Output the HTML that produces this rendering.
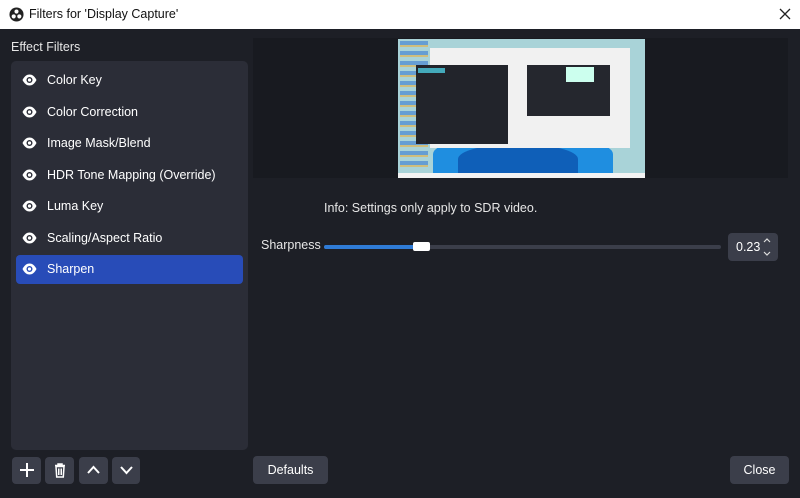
<!DOCTYPE html>
<html><head><meta charset="utf-8"><style>
*{margin:0;padding:0;box-sizing:border-box}
body{width:800px;height:498px;overflow:hidden;font-family:"Liberation Sans",sans-serif;background:#1d1f26;position:relative;color:#fff;font-size:12.5px}
.abs{position:absolute}
.title{left:0;top:0;width:800px;height:29px;background:#fff;color:#111;font-size:12.5px}
.list{left:11px;top:61px;width:237px;height:389px;background:#2b2d37;border-radius:5px}
.item{position:absolute;left:5px;width:227px;height:29px;border-radius:4px;line-height:29px;padding-left:31px}
.item svg{position:absolute;left:6px;top:8px}
.sel{background:#284cb8}
.btn{background:#3b3e4a;border-radius:4px;position:absolute;color:#fff;text-align:center}
</style></head><body>
<div class="abs title">
 <svg class="abs" style="left:9px;top:7px" width="15" height="15" viewBox="0 0 16 16"><circle cx="8" cy="8" r="7.5" fill="#222"/><circle cx="8" cy="4.8" r="2.2" fill="#fff"/><circle cx="5" cy="10" r="2.2" fill="#fff"/><circle cx="11" cy="10" r="2.2" fill="#fff"/></svg>
 <div class="abs" style="left:29px;top:7px">Filters for 'Display Capture'</div>
 <svg class="abs" style="left:779px;top:8px" width="12" height="12" viewBox="0 0 12 12"><path d="M1 1L11 11M11 1L1 11" stroke="#222" stroke-width="1.3"/></svg>
</div>
<div class="abs" style="left:11px;top:40px;color:#e6e6e6">Effect Filters</div>
<div class="abs list">
 <div class="item" style="top:5px"><svg width="15" height="12" viewBox="0 0 15 12"><path d="M0.5 6C2.5 2 5 0.5 7.5 0.5S12.5 2 14.5 6C12.5 10 10 11.5 7.5 11.5S2.5 10 0.5 6Z" fill="#fff"/><circle cx="7.5" cy="6" r="3" fill="#2b2d37"/><circle cx="7.5" cy="6" r="1.6" fill="#fff"/></svg>Color Key</div>
 <div class="item" style="top:37px"><svg width="15" height="12" viewBox="0 0 15 12"><path d="M0.5 6C2.5 2 5 0.5 7.5 0.5S12.5 2 14.5 6C12.5 10 10 11.5 7.5 11.5S2.5 10 0.5 6Z" fill="#fff"/><circle cx="7.5" cy="6" r="3" fill="#2b2d37"/><circle cx="7.5" cy="6" r="1.6" fill="#fff"/></svg>Color Correction</div>
 <div class="item" style="top:68px"><svg width="15" height="12" viewBox="0 0 15 12"><path d="M0.5 6C2.5 2 5 0.5 7.5 0.5S12.5 2 14.5 6C12.5 10 10 11.5 7.5 11.5S2.5 10 0.5 6Z" fill="#fff"/><circle cx="7.5" cy="6" r="3" fill="#2b2d37"/><circle cx="7.5" cy="6" r="1.6" fill="#fff"/></svg>Image Mask/Blend</div>
 <div class="item" style="top:100px"><svg width="15" height="12" viewBox="0 0 15 12"><path d="M0.5 6C2.5 2 5 0.5 7.5 0.5S12.5 2 14.5 6C12.5 10 10 11.5 7.5 11.5S2.5 10 0.5 6Z" fill="#fff"/><circle cx="7.5" cy="6" r="3" fill="#2b2d37"/><circle cx="7.5" cy="6" r="1.6" fill="#fff"/></svg>HDR Tone Mapping (Override)</div>
 <div class="item" style="top:131px"><svg width="15" height="12" viewBox="0 0 15 12"><path d="M0.5 6C2.5 2 5 0.5 7.5 0.5S12.5 2 14.5 6C12.5 10 10 11.5 7.5 11.5S2.5 10 0.5 6Z" fill="#fff"/><circle cx="7.5" cy="6" r="3" fill="#2b2d37"/><circle cx="7.5" cy="6" r="1.6" fill="#fff"/></svg>Luma Key</div>
 <div class="item" style="top:163px"><svg width="15" height="12" viewBox="0 0 15 12"><path d="M0.5 6C2.5 2 5 0.5 7.5 0.5S12.5 2 14.5 6C12.5 10 10 11.5 7.5 11.5S2.5 10 0.5 6Z" fill="#fff"/><circle cx="7.5" cy="6" r="3" fill="#2b2d37"/><circle cx="7.5" cy="6" r="1.6" fill="#fff"/></svg>Scaling/Aspect Ratio</div>
 <div class="item sel" style="top:194px"><svg width="15" height="12" viewBox="0 0 15 12"><path d="M0.5 6C2.5 2 5 0.5 7.5 0.5S12.5 2 14.5 6C12.5 10 10 11.5 7.5 11.5S2.5 10 0.5 6Z" fill="#fff"/><circle cx="7.5" cy="6" r="3" fill="#284cb8"/><circle cx="7.5" cy="6" r="1.6" fill="#fff"/></svg>Sharpen</div>
</div>
<div class="abs" style="left:253px;top:38px;width:535px;height:140px;background:#181a20"></div>
<div class="abs" style="left:398px;top:39px;width:247px;height:139px;background:#a9d3d8;overflow:hidden">
 <div class="abs" style="left:35px;top:95px;width:180px;height:40px;background:#1f8ee0;border-radius:50% 50% 0 0"></div>
 <div class="abs" style="left:60px;top:105px;width:120px;height:30px;background:#0f5fb8;border-radius:50% 50% 0 0"></div>
 <div class="abs" style="left:2px;top:2px;width:28px;height:130px;background:repeating-linear-gradient(#3a7ad0 0 4px,#e8b040 4px 6px,#a9d3d8 6px 10px);opacity:.6"></div>
 <div class="abs" style="left:32px;top:9px;width:200px;height:100px;background:#f1f1f1"></div>
 <div class="abs" style="left:18px;top:26px;width:92px;height:79px;background:#22242b"></div>
 <div class="abs" style="left:20px;top:29px;width:27px;height:5px;background:#4ab"></div>
 <div class="abs" style="left:129px;top:26px;width:83px;height:51px;background:#25272e"></div>
 <div class="abs" style="left:168px;top:28px;width:28px;height:15px;background:#cfe"></div>
 <div class="abs" style="left:0;top:134px;width:247px;height:5px;background:#f3f3f3"></div>
</div>
<div class="abs" style="left:324px;top:201px;color:#e6e6e6">Info: Settings only apply to SDR video.</div>
<div class="abs" style="left:261px;top:238px;color:#e6e6e6">Sharpness</div>
<div class="abs" style="left:324px;top:245px;width:397px;height:4px;background:#3b3e4a;border-radius:2px"></div>
<div class="abs" style="left:324px;top:245px;width:92px;height:4px;background:#2f7bd6;border-radius:2px"></div>
<div class="abs" style="left:413px;top:242px;width:17px;height:9px;background:#fff;border-radius:2px"></div>
<div class="btn" style="left:728px;top:233px;width:50px;height:28px;text-align:left;padding:7px 0 0 8px">0.23</div>
<svg class="abs" style="left:762px;top:236px" width="10" height="22" viewBox="0 0 10 22"><path d="M2 6L5 3L8 6M2 16L5 19L8 16" fill="none" stroke="#ddd" stroke-width="1.2"/></svg>
<div class="btn" style="left:12px;top:457px;width:29px;height:27px"><svg style="margin-top:6px" width="14" height="14" viewBox="0 0 14 14"><path d="M7 0V14M0 7H14" stroke="#fff" stroke-width="2"/></svg></div>
<div class="btn" style="left:45px;top:457px;width:29px;height:27px">
 <svg style="margin-top:6px" width="12" height="15" viewBox="0 0 12 15"><path d="M1 2.5H11M4 2.5V1H8V2.5M2 3.5L2.7 14H9.3L10 3.5Z" fill="none" stroke="#fff" stroke-width="1.5"/><path d="M4.5 5.5V12M6 5.5V12M7.5 5.5V12" stroke="#fff" stroke-width="1"/></svg></div>
<div class="btn" style="left:79px;top:457px;width:29px;height:27px"><svg style="margin-top:8px" width="13" height="9" viewBox="0 0 13 9"><path d="M1 8L6.5 2L12 8" fill="none" stroke="#fff" stroke-width="2"/></svg></div>
<div class="btn" style="left:112px;top:457px;width:28px;height:27px"><svg style="margin-top:9px" width="13" height="9" viewBox="0 0 13 9"><path d="M1 1L6.5 7L12 1" fill="none" stroke="#fff" stroke-width="2"/></svg></div>
<div class="btn" style="left:253px;top:456px;width:75px;height:28px;line-height:28px">Defaults</div>
<div class="btn" style="left:730px;top:456px;width:59px;height:28px;line-height:28px">Close</div>
</body></html>
